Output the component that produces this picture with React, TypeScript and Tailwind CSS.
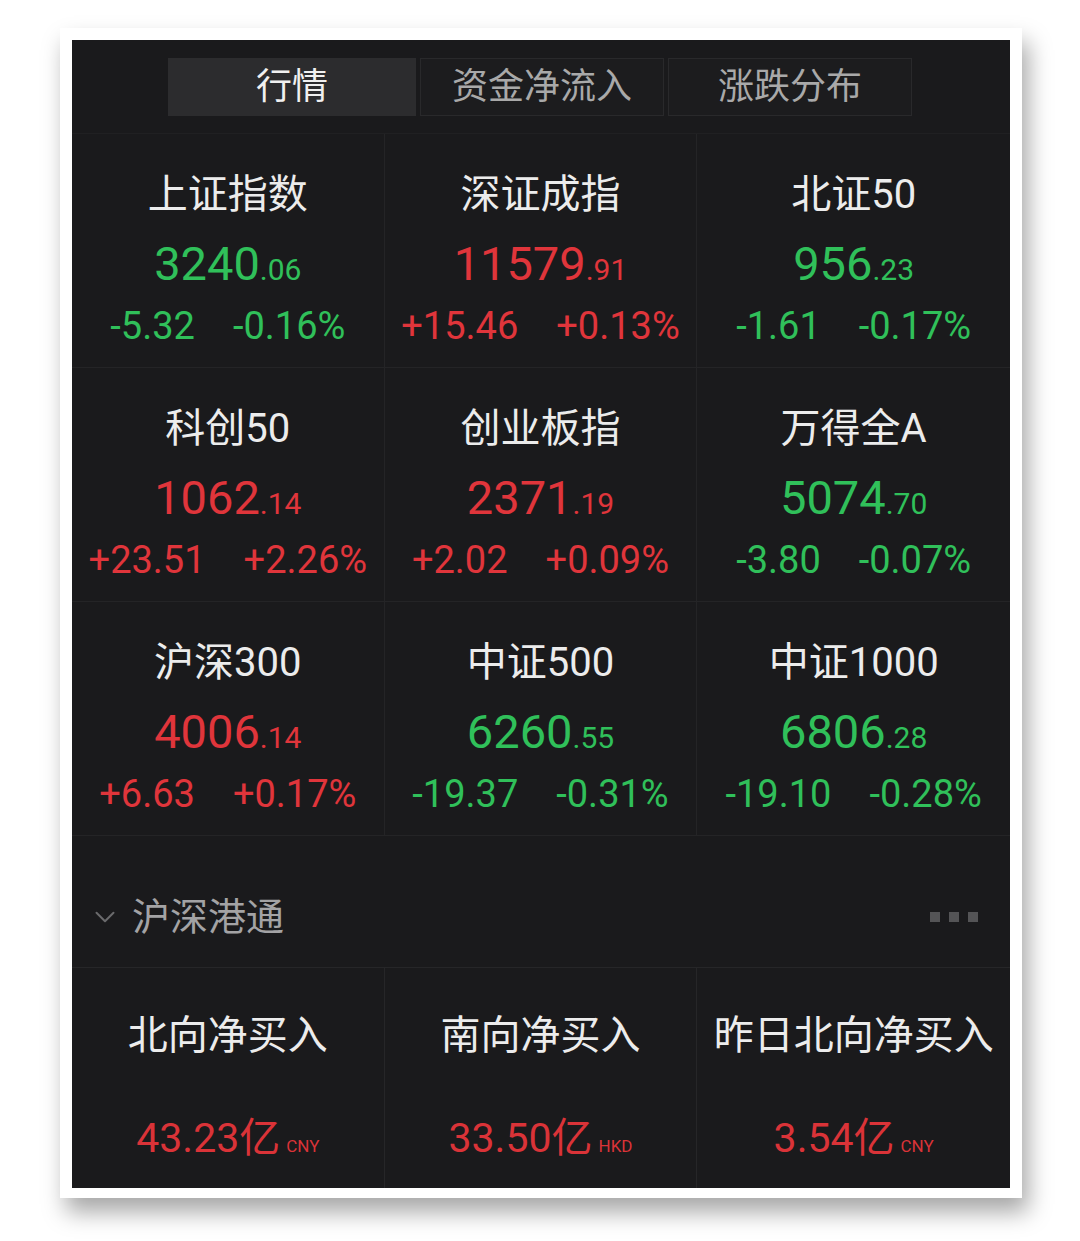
import { ChevronDown } from "lucide-react";

const font = { fontFamily: "Roboto, 'Noto Sans CJK SC', sans-serif" };

type Quote = {
  name: string;
  int: string;
  dec: string;
  chg: string;
  pct: string;
  up: boolean;
};

const quotes: Quote[] = [
  { name: "上证指数", int: "3240", dec: ".06", chg: "-5.32", pct: "-0.16%", up: false },
  { name: "深证成指", int: "11579", dec: ".91", chg: "+15.46", pct: "+0.13%", up: true },
  { name: "北证50", int: "956", dec: ".23", chg: "-1.61", pct: "-0.17%", up: false },
  { name: "科创50", int: "1062", dec: ".14", chg: "+23.51", pct: "+2.26%", up: true },
  { name: "创业板指", int: "2371", dec: ".19", chg: "+2.02", pct: "+0.09%", up: true },
  { name: "万得全A", int: "5074", dec: ".70", chg: "-3.80", pct: "-0.07%", up: false },
  { name: "沪深300", int: "4006", dec: ".14", chg: "+6.63", pct: "+0.17%", up: true },
  { name: "中证500", int: "6260", dec: ".55", chg: "-19.37", pct: "-0.31%", up: false },
  { name: "中证1000", int: "6806", dec: ".28", chg: "-19.10", pct: "-0.28%", up: false },
];

const flows = [
  { name: "北向净买入", value: "43.23亿", unit: "CNY" },
  { name: "南向净买入", value: "33.50亿", unit: "HKD" },
  { name: "昨日北向净买入", value: "3.54亿", unit: "CNY" },
];

function QuoteCell({ q }: { q: Quote }) {
  const color = q.up ? "text-[#e0353b]" : "text-[#30c05a]";
  return (
    <div className="h-[234px] flex flex-col items-center border-r border-b border-[#242426] [&:nth-child(3n)]:border-r-0">
      <div className="mt-[38px] text-[40px] leading-[46px] text-[#ececec]">{q.name}</div>
      <div className={`mt-[22px] leading-[48px] ${color}`}>
        <span className="text-[47px]">{q.int}</span>
        <span className="text-[30px]">{q.dec}</span>
      </div>
      <div className={`mt-[5px] flex gap-[38px] text-[38px] leading-[44px] ${color}`}>
        <span>{q.chg}</span>
        <span>{q.pct}</span>
      </div>
    </div>
  );
}

export default function App() {
  return (
    <div className="w-[1080px] h-[1241px] bg-white pt-[28px] pl-[60px]" style={font}>
      <div className="w-[962px] h-[1170px] bg-white p-[12px] pb-[10px] shadow-[6px_14px_22px_rgba(0,0,0,0.35)]">
        <div className="w-[938px] h-[1148px] bg-[#1a1a1c] flex flex-col">
          {/* tabs */}
          <div className="h-[94px] pt-[18px] pl-[96px] flex gap-[4px] border-b border-[#202022]">
            <div className="w-[248px] h-[58px] bg-[#2c2c2e] flex items-center justify-center text-[36px] text-[#f0f0f0]">
              行情
            </div>
            <div className="w-[244px] h-[58px] border border-[#29292b] bg-[#1c1c1e] flex items-center justify-center text-[36px] text-[#a9a9a9]">
              资金净流入
            </div>
            <div className="w-[244px] h-[58px] border border-[#29292b] bg-[#1c1c1e] flex items-center justify-center text-[36px] text-[#a9a9a9]">
              涨跌分布
            </div>
          </div>

          {/* index grid */}
          <div className="grid grid-cols-3">
            {quotes.map((q) => (
              <QuoteCell key={q.name} q={q} />
            ))}
          </div>

          {/* section header */}
          <div className="h-[132px] flex items-center pt-[30px] pl-[16px] pr-[32px] border-b border-[#262628]">
            <ChevronDown className="w-[34px] h-[34px] text-[#6a6a6c]" strokeWidth={1.4} />
            <span className="ml-[10px] text-[38px] leading-[50px] text-[#a3a3a5]">沪深港通</span>
            <div className="ml-auto flex gap-[9px]">
              <span className="w-[10px] h-[10px] bg-[#545456]" />
              <span className="w-[10px] h-[10px] bg-[#545456]" />
              <span className="w-[10px] h-[10px] bg-[#545456]" />
            </div>
          </div>

          {/* flows */}
          <div className="grid grid-cols-3 flex-1">
            {flows.map((f, i) => (
              <div
                key={f.name}
                className={`flex flex-col items-center ${i < 2 ? "border-r border-[#262628]" : ""}`}
              >
                <div className="mt-[44px] text-[40px] leading-[48px] whitespace-nowrap text-[#ececec]">
                  {f.name}
                </div>
                <div className="mt-[54px] flex items-baseline text-[#da3338]">
                  <span className="text-[41px] leading-[48px]">{f.value}</span>
                  <span className="ml-[6px] text-[17px]">{f.unit}</span>
                </div>
              </div>
            ))}
          </div>
        </div>
      </div>
    </div>
  );
}
